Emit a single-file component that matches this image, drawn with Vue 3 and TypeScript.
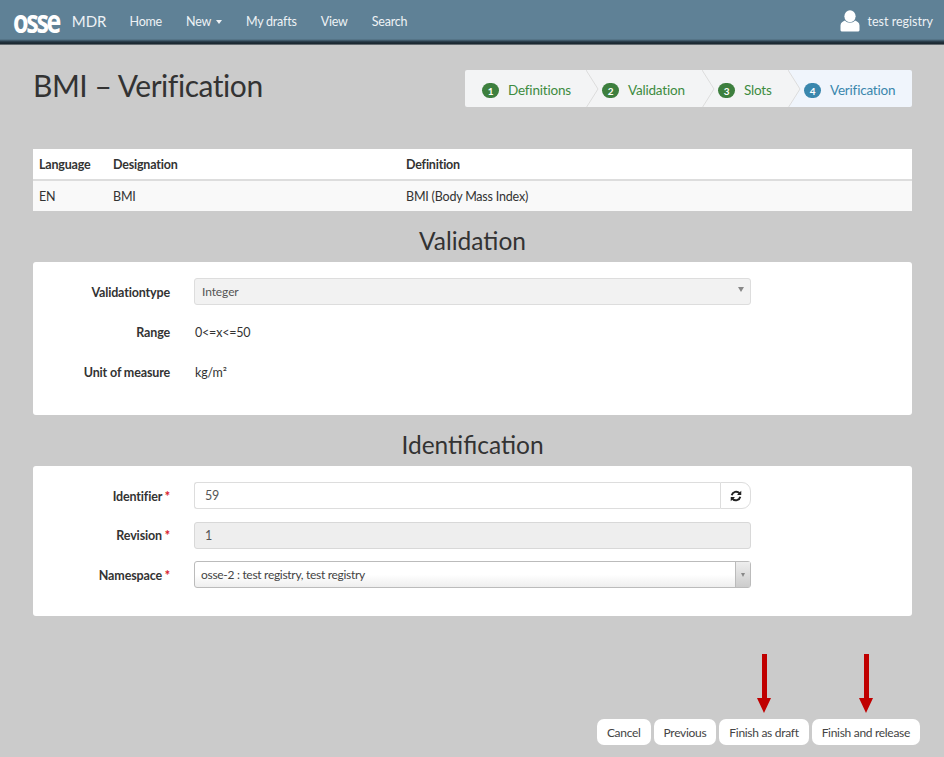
<template>
  <div class="page">
    <nav class="navbar">
      <span class="logo">osse</span>
      <span class="brand">MDR</span>
      <a class="nav-link first">Home</a>
      <a class="nav-link">New <i class="caret"></i></a>
      <a class="nav-link">My drafts</a>
      <a class="nav-link">View</a>
      <a class="nav-link">Search</a>
      <div class="user">
        <svg width="20" height="22" viewBox="0 0 20 22">
          <ellipse cx="10" cy="6.2" rx="5.6" ry="6" fill="#fff" />
          <path d="M0.5 20V15.5C0.5 12.8 3 11.2 5 10.6C6.2 12 8 12.8 10 12.8C12 12.8 13.8 12 15 10.6C17 11.2 19.5 12.8 19.5 15.5V20C19.5 21 18.5 21.6 17.5 21.6H2.5C1.5 21.6 0.5 21 0.5 20Z" fill="#fff" />
        </svg>
        <span class="user-name">test registry</span>
      </div>
    </nav>

    <main class="content">
      <header class="head">
        <h1>BMI – Verification</h1>
        <ol class="steps">
          <li v-for="s in steps" :key="s.n" :class="['step', { active: s.n === 4 }]" :style="{ width: s.width + 'px' }">
            <span class="badge">{{ s.n }}</span>
            <span>{{ s.label }}</span>
            <svg v-if="s.n < 4" class="chevron" width="13" height="38" viewBox="0 0 13 38">
              <path d="M0 0L12 19L0 38Z" fill="#f3f4f5" />
              <path d="M0 0L12 19L0 38" fill="none" stroke="#dcdcdc" />
            </svg>
          </li>
        </ol>
      </header>

      <table class="defs">
        <thead>
          <tr>
            <th class="col-lang">Language</th>
            <th class="col-des">Designation</th>
            <th>Definition</th>
          </tr>
        </thead>
        <tbody>
          <tr>
            <td>EN</td>
            <td>BMI</td>
            <td>BMI (Body Mass Index)</td>
          </tr>
        </tbody>
      </table>

      <h2>Validation</h2>
      <section class="panel validation">
        <div class="row">
          <label>Validationtype</label>
          <div class="fake-select">
            <span>Integer</span>
            <i class="mini-caret up"></i>
          </div>
        </div>
        <div class="row">
          <label>Range</label>
          <span class="static">0&lt;=x&lt;=50</span>
        </div>
        <div class="row">
          <label>Unit of measure</label>
          <span class="static">kg/m²</span>
        </div>
      </section>

      <h2>Identification</h2>
      <section class="panel identification">
        <div class="row">
          <label>Identifier <b>*</b></label>
          <div class="input-group">
            <div class="input grow">59</div>
            <button class="refresh" aria-label="Refresh">
              <svg width="12" height="12" viewBox="0 0 24 24" fill="none" stroke="#222" stroke-width="4">
                <path d="M3.5 10.5A9 9 0 0 1 19 6.5" />
                <path d="M20.5 13.5A9 9 0 0 1 5 17.5" />
                <path d="M22.5 1.5V10H14Z" fill="#222" stroke="none" />
                <path d="M1.5 22.5V14H10Z" fill="#222" stroke="none" />
              </svg>
            </button>
          </div>
        </div>
        <div class="row">
          <label>Revision <b>*</b></label>
          <div class="input disabled">1</div>
        </div>
        <div class="row">
          <label>Namespace <b>*</b></label>
          <div class="ns-select">
            <span class="ns-text">osse-2 : test registry, test registry</span>
            <span class="ns-arrow"><i class="mini-caret"></i></span>
          </div>
        </div>
      </section>

      <footer class="actions">
        <button class="btn">Cancel</button>
        <button class="btn">Previous</button>
        <button class="btn">Finish as draft<i class="arrow"></i></button>
        <button class="btn">Finish and release<i class="arrow"></i></button>
      </footer>
    </main>
  </div>
</template>

<script setup lang="ts">
const steps = [
  { n: 1, label: 'Definitions', width: 122 },
  { n: 2, label: 'Validation', width: 116 },
  { n: 3, label: 'Slots', width: 86 },
  { n: 4, label: 'Verification', width: 123 }
]
</script>

<style>
html, body {
  margin: 0;
  background: #cbcbcb;
}
</style>

<style scoped>
.page {
  width: 944px;
  height: 757px;
  overflow: hidden;
  background: #cbcbcb;
  font-family: Lato, "Liberation Sans", sans-serif;
  font-size: 12.5px;
  letter-spacing: -0.2px;
  color: #333;
}

.navbar {
  height: 45px;
  box-sizing: border-box;
  display: flex;
  align-items: center;
  padding: 0 11px 3px 13px;
  background: linear-gradient(to bottom, #5f8196 0, #5f8196 39px, #21323d 42px, #1a262e 44px, #a9adaf 45px);
  color: #eef2f5;
}

.logo {
  flex: none;
  padding-right: 4px;
  margin-right: -17px;
  font-family: "Open Sans", sans-serif;
  font-size: 33px;
  font-weight: 700;
  letter-spacing: -3px;
  line-height: 40px;
  white-space: nowrap;
  color: #fff;
  transform: scaleX(0.76);
  transform-origin: left center;
}

.brand {
  margin-left: 11px;
  font-size: 15px;
  letter-spacing: 0;
}

.nav-link {
  margin-left: 24px;
}

.nav-link.first {
  margin-left: 23px;
}

.caret {
  display: inline-block;
  margin-left: 2px;
  vertical-align: middle;
  border-top: 4px solid #eef2f5;
  border-left: 3.5px solid transparent;
  border-right: 3.5px solid transparent;
}

.user {
  margin-left: auto;
  display: flex;
  align-items: center;
  gap: 8px;
}

.user-name {
  letter-spacing: 0;
}

.content {
  padding: 25px 32px 0 33px;
  position: relative;
}

.head {
  display: flex;
  justify-content: space-between;
  height: 79px;
}

h1 {
  margin: -2px 0 0;
  font-size: 30px;
  font-weight: 400;
  letter-spacing: -0.45px;
  line-height: 34px;
  color: #333;
}

.steps {
  display: flex;
  margin: 0;
  padding: 0;
  height: 37px;
  list-style: none;
  border-radius: 2px;
  overflow: hidden;
}

.step {
  position: relative;
  box-sizing: border-box;
  display: flex;
  align-items: center;
  gap: 9px;
  padding-top: 3px;
  padding-left: 17px;
  background: #f3f4f5;
  color: #3d8b40;
  font-size: 13.5px;
  letter-spacing: -0.2px;
}

.step + .step {
  padding-left: 15px;
}

.step.active {
  background: #f0f5fc;
  color: #3a87ad;
  padding-left: 15px;
}

.badge {
  width: 17px;
  height: 15px;
  border-radius: 8px;
  background: #3d7f3e;
  color: #fff;
  font-size: 10px;
  font-weight: 700;
  text-align: center;
  line-height: 16px;
}

.active .badge {
  background: #3a87ad;
}

.chevron {
  position: absolute;
  right: -12px;
  top: 0;
  z-index: 1;
}

.defs {
  width: 100%;
  border-collapse: collapse;
  table-layout: fixed;
  background: #fff;
}

.defs th {
  height: 30px;
  padding: 0 6px;
  text-align: left;
  font-weight: 700;
  border-bottom: 2px solid #ddd;
}

.defs td {
  height: 30px;
  padding: 0 6px;
  background: #f9f9f9;
}

.col-lang {
  width: 62px;
}

.col-des {
  width: 281px;
}

h2 {
  margin: 0;
  height: 51px;
  box-sizing: border-box;
  padding-top: 16px;
  font-size: 24.5px;
  font-weight: 400;
  letter-spacing: 0;
  line-height: 28px;
  text-align: center;
  color: #333;
}

.panel {
  background: #fff;
  border-radius: 3px;
  box-sizing: border-box;
  padding: 16px 161px 0 0;
}

.validation {
  height: 153px;
  display: flex;
  flex-direction: column;
  gap: 13px;
}

.identification {
  height: 150px;
  display: flex;
  flex-direction: column;
  gap: 12.5px;
}

.row {
  display: flex;
  align-items: center;
  min-height: 27px;
}

label {
  width: 137px;
  flex: none;
  margin-right: 24px;
  padding-top: 1px;
  text-align: right;
  font-weight: 700;
  letter-spacing: -0.15px;
}

label b {
  color: #d9232e;
}

.fake-select {
  flex: 1;
  height: 27px;
  box-sizing: border-box;
  display: flex;
  align-items: center;
  justify-content: space-between;
  padding: 0 6px 0 7px;
  background: #f2f2f2;
  border: 1px solid #ddd;
  border-radius: 3px;
  color: #555;
  font-size: 12px;
  letter-spacing: -0.1px;
}

.mini-caret {
  display: block;
  border-top: 4px solid #888;
  border-left: 2.5px solid transparent;
  border-right: 2.5px solid transparent;
}

.mini-caret.up {
  margin-bottom: 5px;
  border-top-width: 5px;
  border-left-width: 3px;
  border-right-width: 3px;
}

.static {
  padding-top: 1px;
  margin-left: 1px;
  color: #333;
}

.input-group {
  flex: 1;
  display: flex;
}

.input {
  flex: 1;
  height: 27px;
  box-sizing: border-box;
  padding: 0 10px;
  line-height: 25px;
  border: 1px solid #ddd;
  border-radius: 3px;
  color: #555;
  background: #fff;
}

.input.grow {
  border-right: 0;
  border-radius: 3px 0 0 3px;
}

.input.disabled {
  background: #eee;
  border-color: #d8d8d8;
}

.refresh {
  width: 31px;
  height: 27px;
  padding: 0;
  display: flex;
  align-items: center;
  justify-content: center;
  background: #fff;
  border: 1px solid #ddd;
  border-radius: 0 9px 9px 0;
}

.ns-select {
  flex: 1;
  height: 27px;
  box-sizing: border-box;
  display: flex;
  background: linear-gradient(to bottom, #fff 0, #fff 50%, #eee 100%);
  border: 1px solid #bbb;
  border-radius: 3px;
  color: #444;
  font-size: 12px;
  letter-spacing: -0.3px;
}

.ns-text {
  flex: 1;
  padding-left: 6px;
  line-height: 25px;
}

.ns-arrow {
  width: 14px;
  display: flex;
  align-items: center;
  justify-content: center;
  border-left: 1px solid #bbb;
  background: linear-gradient(to bottom, #eee 0, #ccc 100%);
}

.actions {
  position: absolute;
  top: 674px;
  right: 24px;
  display: flex;
  gap: 3px;
}

.btn {
  position: relative;
  height: 26px;
  padding: 0 10px;
  border: 0;
  border-radius: 7px;
  background: #fff;
  color: #444;
  font-family: inherit;
  font-size: 12px;
  letter-spacing: -0.3px;
}

.arrow {
  position: absolute;
  left: 50%;
  top: -65px;
  width: 5px;
  height: 44px;
  margin-left: -2px;
  background: #c00000;
}

.arrow::after {
  content: '';
  position: absolute;
  left: -5px;
  top: 44px;
  border-top: 15px solid #c00000;
  border-left: 7.5px solid transparent;
  border-right: 7.5px solid transparent;
}
</style>
